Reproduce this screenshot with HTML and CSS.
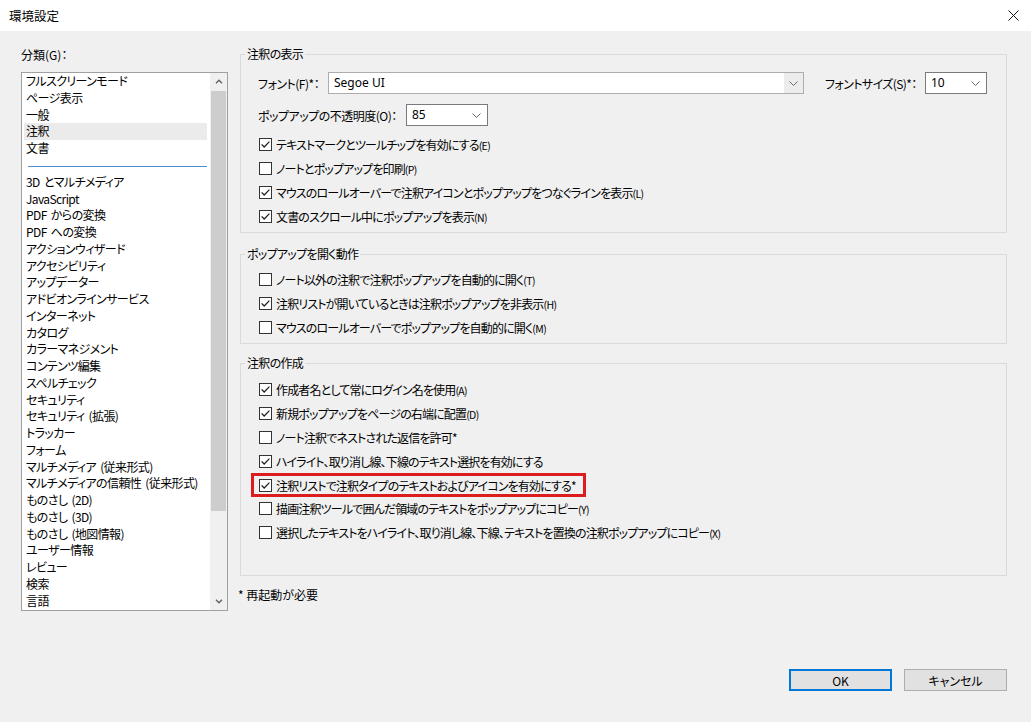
FILE: index.html
```html
<!DOCTYPE html>
<html lang="ja">
<head>
    <meta charset="UTF-8">
    <title>環境設定</title>
    <link rel="stylesheet" href="styles.css">
</head>
<body>
    <svg class="defs" width="0" height="0">
        <symbol id="cb-on" viewBox="0 0 13 13">
            <rect x="0.5" y="0.5" width="12" height="12" fill="#fff" stroke="#333"/>
            <path d="M2.6 6.4 L5.2 9 L10.4 3.6" fill="none" stroke="#222" stroke-width="1.3"/>
        </symbol>
        <symbol id="cb-off" viewBox="0 0 13 13">
            <rect x="0.5" y="0.5" width="12" height="12" fill="#fff" stroke="#333"/>
        </symbol>
        <symbol id="chev" viewBox="0 0 9 5">
            <path d="M0.5 0.5 L4.5 4.5 L8.5 0.5" fill="none" stroke="#666"/>
        </symbol>
    </svg>

    <div class="titlebar">
        <span>環境設定</span>
        <svg class="close" width="11" height="11" viewBox="0 0 11 11">
            <path d="M0.5 0.5 L10.5 10.5 M10.5 0.5 L0.5 10.5" stroke="#111" stroke-width="1"/>
        </svg>
    </div>

    <div class="main">
        <div class="category">
            <div class="category-label">分類(G)：</div>
            <div class="list">
                <div class="items">
                    <div class="item">フルスクリーンモード</div>
                    <div class="item">ページ表示</div>
                    <div class="item">一般</div>
                    <div class="item selected">注釈</div>
                    <div class="item">文書</div>
                    <div class="separator"></div>
                    <div class="item">3D とマルチメディア</div>
                    <div class="item">JavaScript</div>
                    <div class="item">PDF からの変換</div>
                    <div class="item">PDF への変換</div>
                    <div class="item">アクションウィザード</div>
                    <div class="item">アクセシビリティ</div>
                    <div class="item">アップデーター</div>
                    <div class="item">アドビオンラインサービス</div>
                    <div class="item">インターネット</div>
                    <div class="item">カタログ</div>
                    <div class="item">カラーマネジメント</div>
                    <div class="item">コンテンツ編集</div>
                    <div class="item">スペルチェック</div>
                    <div class="item">セキュリティ</div>
                    <div class="item">セキュリティ (拡張)</div>
                    <div class="item">トラッカー</div>
                    <div class="item">フォーム</div>
                    <div class="item">マルチメディア (従来形式)</div>
                    <div class="item">マルチメディアの信頼性 (従来形式)</div>
                    <div class="item">ものさし (2D)</div>
                    <div class="item">ものさし (3D)</div>
                    <div class="item">ものさし (地図情報)</div>
                    <div class="item">ユーザー情報</div>
                    <div class="item">レビュー</div>
                    <div class="item">検索</div>
                    <div class="item">言語</div>
                </div>
                <div class="scrollbar">
                    <div class="arrow">
                        <svg width="8" height="5" viewBox="0 0 8 5"><path d="M1 4.3 L4 1.3 L7 4.3" fill="none" stroke="#606060" stroke-width="1.4"/></svg>
                    </div>
                    <div class="track"><div class="thumb"></div></div>
                    <div class="arrow">
                        <svg width="8" height="5" viewBox="0 0 8 5"><path d="M1 0.7 L4 3.7 L7 0.7" fill="none" stroke="#606060" stroke-width="1.4"/></svg>
                    </div>
                </div>
            </div>
        </div>

        <div class="options">
            <fieldset class="group group-display">
                <legend>注釈の表示</legend>
                <div class="field-row font-row">
                    <span class="lbl-font">フォント(F)*：</span>
                    <div class="combo editable">
                        <span class="value">Segoe UI</span>
                        <span class="drop"><svg width="9" height="5"><use href="#chev"/></svg></span>
                    </div>
                    <span class="lbl-size">フォントサイズ(S)*：</span>
                    <div class="combo dark size">
                        <span class="value">10</span>
                        <span class="drop"><svg width="9" height="5"><use href="#chev"/></svg></span>
                    </div>
                </div>
                <div class="field-row opacity-row">
                    <span class="lbl-opacity">ポップアップの不透明度(O)：</span>
                    <div class="combo dark opacity">
                        <span class="value">85</span>
                        <span class="drop"><svg width="9" height="5"><use href="#chev"/></svg></span>
                    </div>
                </div>
                <div class="checks">
                    <div class="check"><svg width="13" height="13"><use href="#cb-on"/></svg><span>テキストマークとツールチップを有効にする<span class="key">(E)</span></span></div>
                    <div class="check"><svg width="13" height="13"><use href="#cb-off"/></svg><span>ノートとポップアップを印刷<span class="key">(P)</span></span></div>
                    <div class="check"><svg width="13" height="13"><use href="#cb-on"/></svg><span>マウスのロールオーバーで注釈アイコンとポップアップをつなぐラインを表示<span class="key">(L)</span></span></div>
                    <div class="check"><svg width="13" height="13"><use href="#cb-on"/></svg><span>文書のスクロール中にポップアップを表示<span class="key">(N)</span></span></div>
                </div>
            </fieldset>

            <fieldset class="group group-open">
                <legend>ポップアップを開く動作</legend>
                <div class="checks">
                    <div class="check"><svg width="13" height="13"><use href="#cb-off"/></svg><span>ノート以外の注釈で注釈ポップアップを自動的に開く<span class="key">(T)</span></span></div>
                    <div class="check"><svg width="13" height="13"><use href="#cb-on"/></svg><span>注釈リストが開いているときは注釈ポップアップを非表示<span class="key">(H)</span></span></div>
                    <div class="check"><svg width="13" height="13"><use href="#cb-off"/></svg><span>マウスのロールオーバーでポップアップを自動的に開く<span class="key">(M)</span></span></div>
                </div>
            </fieldset>

            <fieldset class="group group-create">
                <legend>注釈の作成</legend>
                <div class="checks">
                    <div class="check"><svg width="13" height="13"><use href="#cb-on"/></svg><span>作成者名として常にログイン名を使用<span class="key">(A)</span></span></div>
                    <div class="check"><svg width="13" height="13"><use href="#cb-on"/></svg><span>新規ポップアップをページの右端に配置<span class="key">(D)</span></span></div>
                    <div class="check"><svg width="13" height="13"><use href="#cb-off"/></svg><span>ノート注釈でネストされた返信を許可*</span></div>
                    <div class="check"><svg width="13" height="13"><use href="#cb-on"/></svg><span>ハイライト、取り消し線、下線のテキスト選択を有効にする</span></div>
                    <div class="check marked"><svg width="13" height="13"><use href="#cb-on"/></svg><span>注釈リストで注釈タイプのテキストおよびアイコンを有効にする*</span></div>
                    <div class="check"><svg width="13" height="13"><use href="#cb-off"/></svg><span>描画注釈ツールで囲んだ領域のテキストをポップアップにコピー<span class="key">(Y)</span></span></div>
                    <div class="check"><svg width="13" height="13"><use href="#cb-off"/></svg><span>選択したテキストをハイライト、取り消し線、下線、テキストを置換の注釈ポップアップにコピー<span class="key">(X)</span></span></div>
                </div>
            </fieldset>

            <p class="note">* 再起動が必要</p>
        </div>
    </div>

    <div class="footer">
        <button class="btn default">OK</button>
        <button class="btn">キャンセル</button>
    </div>
</body>
</html>
```

FILE: styles.css
```css
* {
    margin: 0;
    padding: 0;
    box-sizing: border-box;
}

body {
    width: 1031px;
    height: 722px;
    overflow: hidden;
    background-color: #f0f0f0;
    font-family: "Noto Sans CJK JP", "Noto Sans", sans-serif;
    font-size: 12px;
    font-feature-settings: "palt";
    color: #000;
    display: flex;
    flex-direction: column;
}

.defs {
    display: block;
    width: 0;
    height: 0;
    overflow: hidden;
}

svg {
    display: block;
    flex-shrink: 0;
}

/* title bar */
.titlebar {
    height: 31px;
    flex-shrink: 0;
    background-color: #fff;
    display: flex;
    align-items: center;
    justify-content: space-between;
    padding: 0 12px 1px 9px;
    font-size: 12.5px;
}

.main {
    flex: 1;
    display: flex;
    padding-left: 21px;
}

/* category list */
.category {
    width: 207px;
    padding-top: 15px;
}

.category-label {
    line-height: 18px;
    margin-bottom: 8px;
}

.list {
    height: 539px;
    border: 1px solid #a0a0a0;
    background-color: #fff;
    display: flex;
}

.items {
    flex: 1;
    padding: 0 3px 0 2px;
    overflow: hidden;
}

.item {
    line-height: 16.75px;
    height: 16.75px;
    padding-left: 2px;
    white-space: nowrap;
    letter-spacing: -0.6px;
    word-spacing: 2px;
}

.item.selected {
    background-color: #ebebeb;
}

.separator {
    height: 1px;
    background-color: #4a8fd0;
    margin: 9px 0 7px 4px;
}

.scrollbar {
    width: 17px;
    background-color: #f0f0f0;
    display: flex;
    flex-direction: column;
}

.arrow {
    height: 17px;
    display: flex;
    align-items: center;
    justify-content: center;
}

.track {
    flex: 1;
    padding: 1px 1px 0;
}

.thumb {
    height: 420px;
    background-color: #cdcdcd;
}

/* option groups */
.options {
    width: 767px;
    margin-left: 12px;
    padding-top: 14px;
}

.group {
    border: 1px solid #dadada;
    padding: 0 19px 4px 18px;
    min-inline-size: 0;
}

.group legend {
    line-height: 18px;
    padding: 0 2px;
    margin-left: -14px;
    letter-spacing: -0.7px;
}

.group-open {
    margin-top: 12px;
}

.group-create {
    margin-top: 10px;
    padding-bottom: 30px;
}

.field-row {
    display: flex;
    align-items: center;
    height: 22px;
}

.font-row {
    margin-top: 9px;
}

.opacity-row {
    margin-top: 10px;
}

.lbl-font {
    width: 70px;
    margin-left: -1px;
    white-space: nowrap;
    letter-spacing: -0.5px;
}

.lbl-size {
    width: 100px;
    margin-left: 21px;
    white-space: nowrap;
    letter-spacing: -0.6px;
}

.lbl-opacity {
    width: 148px;
    margin-left: -1px;
    white-space: nowrap;
    letter-spacing: -0.5px;
}

.combo {
    height: 22px;
    border: 1px solid #7a7a7a;
    background-color: #fff;
    display: flex;
    align-items: stretch;
}

.combo.editable {
    flex: 1;
    border-color: #adadad;
}

.combo.size {
    width: 62px;
}

.combo.opacity {
    width: 82px;
}

.combo .value {
    flex: 1;
    padding-left: 5px;
    line-height: 20px;
    font-family: "Noto Sans", "Noto Sans CJK JP", sans-serif;
}

.combo .drop {
    width: 19px;
    display: flex;
    align-items: center;
    justify-content: center;
}

.combo.dark .drop {
    width: 22px;
}

.combo.editable .drop {
    background-color: #ececec;
}

.checks {
    margin-top: 6px;
}

.group-open .checks {
    margin-top: 4px;
}

.check {
    height: 24px;
    display: flex;
    align-items: center;
    gap: 4px;
    white-space: nowrap;
    letter-spacing: -0.85px;
}

.key {
    font-size: 10.5px;
    letter-spacing: -0.6px;
}

.group-create .check {
    height: 23.8px;
}

.check.marked {
    width: max-content;
    margin-left: -8px;
    padding: 0 10px 0 8px;
    outline: 3px solid #dc1d1d;
    outline-offset: -3px;
}

.note {
    margin: 10px 0 0 -2px;
    line-height: 18px;
}

/* buttons */
.footer {
    height: 53px;
    flex-shrink: 0;
    display: flex;
    justify-content: flex-end;
    align-items: flex-start;
    gap: 12px;
    padding-right: 24px;
}

.btn {
    width: 103px;
    height: 22px;
    background-color: #e1e1e1;
    border: 1px solid #adadad;
    font: inherit;
    color: #000;
    display: flex;
    align-items: center;
    justify-content: center;
}

.btn.default {
    border: 2px solid #0078d7;
}
```
